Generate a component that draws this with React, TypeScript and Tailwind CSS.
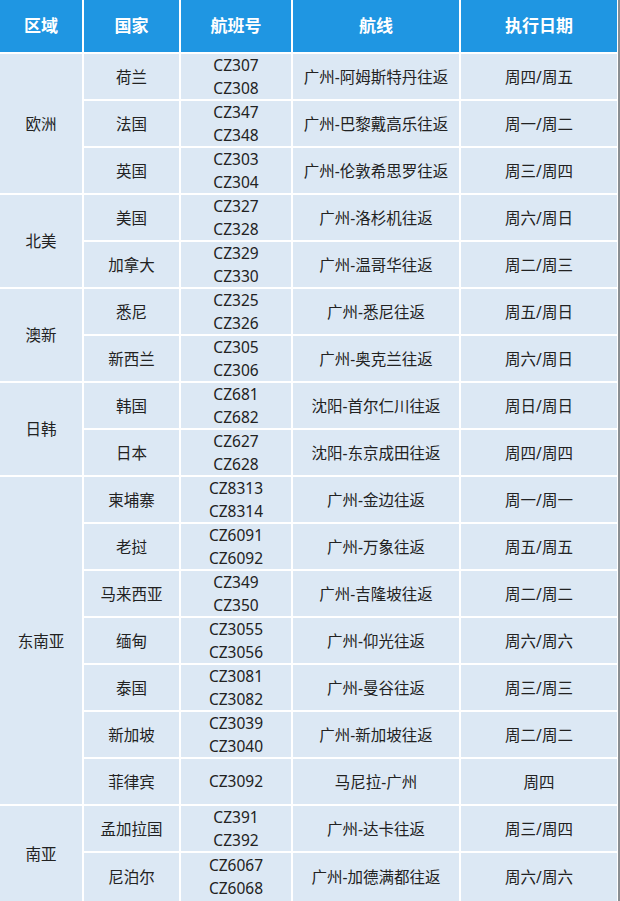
const regions = [
  {
    name: "欧洲",
    rows: [
      ["荷兰", "CZ307\nCZ308", "广州-阿姆斯特丹往返", "周四/周五"],
      ["法国", "CZ347\nCZ348", "广州-巴黎戴高乐往返", "周一/周二"],
      ["英国", "CZ303\nCZ304", "广州-伦敦希思罗往返", "周三/周四"],
    ],
  },
  {
    name: "北美",
    rows: [
      ["美国", "CZ327\nCZ328", "广州-洛杉机往返", "周六/周日"],
      ["加拿大", "CZ329\nCZ330", "广州-温哥华往返", "周二/周三"],
    ],
  },
  {
    name: "澳新",
    rows: [
      ["悉尼", "CZ325\nCZ326", "广州-悉尼往返", "周五/周日"],
      ["新西兰", "CZ305\nCZ306", "广州-奥克兰往返", "周六/周日"],
    ],
  },
  {
    name: "日韩",
    rows: [
      ["韩国", "CZ681\nCZ682", "沈阳-首尔仁川往返", "周日/周日"],
      ["日本", "CZ627\nCZ628", "沈阳-东京成田往返", "周四/周四"],
    ],
  },
  {
    name: "东南亚",
    rows: [
      ["柬埔寨", "CZ8313\nCZ8314", "广州-金边往返", "周一/周一"],
      ["老挝", "CZ6091\nCZ6092", "广州-万象往返", "周五/周五"],
      ["马来西亚", "CZ349\nCZ350", "广州-吉隆坡往返", "周二/周二"],
      ["缅甸", "CZ3055\nCZ3056", "广州-仰光往返", "周六/周六"],
      ["泰国", "CZ3081\nCZ3082", "广州-曼谷往返", "周三/周三"],
      ["新加坡", "CZ3039\nCZ3040", "广州-新加坡往返", "周二/周二"],
      ["菲律宾", "CZ3092", "马尼拉-广州", "周四"],
    ],
  },
  {
    name: "南亚",
    rows: [
      ["孟加拉国", "CZ391\nCZ392", "广州-达卡往返", "周三/周四"],
      ["尼泊尔", "CZ6067\nCZ6068", "广州-加德满都往返", "周六/周六"],
    ],
  },
];

const spanClass: Record<number, string> = {
  2: "row-span-2",
  3: "row-span-3",
  7: "row-span-7",
};

const cell = "flex items-center justify-center bg-[#dce8f4] text-center";

export default function App() {
  return (
    <div
      className="h-[901px] w-[620px] overflow-hidden bg-white"
      style={{ fontFamily: '"Noto Sans", "Noto Sans CJK SC", sans-serif' }}
    >
      <div className="w-[620px] border-r-[2px] border-[#8a8e92] pr-[1px]">
        <div className="grid grid-cols-[82px_95px_110px_166px_156px] grid-rows-[52px_repeat(17,45px)_48px] gap-[2px] text-[15.5px] leading-[22px] text-[#222]">
          {["区域", "国家", "航班号", "航线", "执行日期"].map((h) => (
            <div
              key={h}
              className="flex items-center justify-center bg-[#1f96e2] text-[17px] font-bold text-white"
            >
              {h}
            </div>
          ))}
          {regions.map((r) => (
            <div key={r.name} className="contents">
              <div className={`${cell} ${spanClass[r.rows.length]}`}>{r.name}</div>
              {r.rows.map((row, i) => (
                <div key={i} className="contents">
                  <div className={`${cell} col-start-2`}>{row[0]}</div>
                  <div className={`${cell} whitespace-pre-line text-[15.5px] leading-[23px]`}>{row[1]}</div>
                  <div className={cell}>{row[2]}</div>
                  <div className={cell}>{row[3]}</div>
                </div>
              ))}
            </div>
          ))}
        </div>
      </div>
    </div>
  );
}
